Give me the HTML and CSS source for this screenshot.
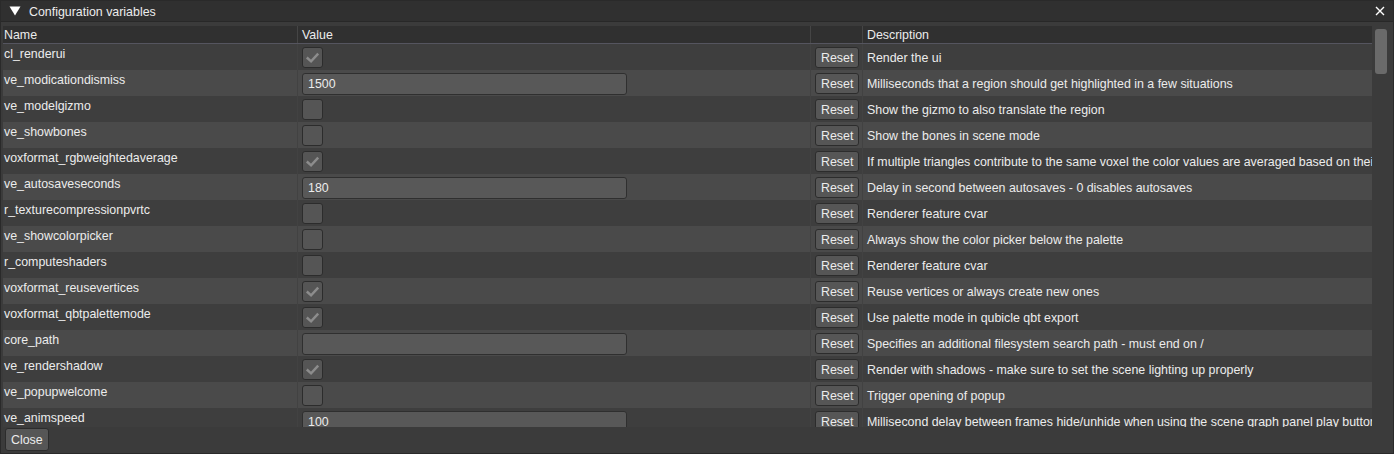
FILE: index.html
```html
<!DOCTYPE html>
<html>
<head>
<meta charset="utf-8">
<link rel="stylesheet" href="styles.css">
</head>
<body>
<div class="window">
  <div class="titlebar">
    <svg class="arrow" width="12" height="10" viewBox="0 0 12 10"><polygon points="0.5,0.5 11.5,0.5 6,9.5" fill="#ffffff"/></svg>
    <span class="title">Configuration variables</span>
    <svg class="close" width="10" height="10" viewBox="0 0 10 10"><path d="M1 1 L9 9 M9 1 L1 9" stroke="#ffffff" stroke-width="1.4"/></svg>
  </div>
  <div class="content">
    <div class="tablewrap">
      <div class="table">
        <div class="row header">
          <div class="cell name">Name</div>
          <div class="cell value">Value</div>
          <div class="cell btncell"></div>
          <div class="cell desc">Description</div>
        </div>
        <div class="row">
          <div class="cell name">cl_renderui</div>
          <div class="cell value"><span class="check on"><svg viewBox="0 0 20 20"><path d="M4 10 L8.5 14 L16 6"/></svg></span></div>
          <div class="cell btncell"><span class="btn">Reset</span></div>
          <div class="cell desc">Render the ui</div>
        </div>
        <div class="row">
          <div class="cell name">ve_modicationdismiss</div>
          <div class="cell value"><span class="input">1500</span></div>
          <div class="cell btncell"><span class="btn">Reset</span></div>
          <div class="cell desc">Milliseconds that a region should get highlighted in a few situations</div>
        </div>
        <div class="row">
          <div class="cell name">ve_modelgizmo</div>
          <div class="cell value"><span class="check"></span></div>
          <div class="cell btncell"><span class="btn">Reset</span></div>
          <div class="cell desc">Show the gizmo to also translate the region</div>
        </div>
        <div class="row">
          <div class="cell name">ve_showbones</div>
          <div class="cell value"><span class="check"></span></div>
          <div class="cell btncell"><span class="btn">Reset</span></div>
          <div class="cell desc">Show the bones in scene mode</div>
        </div>
        <div class="row">
          <div class="cell name">voxformat_rgbweightedaverage</div>
          <div class="cell value"><span class="check on"><svg viewBox="0 0 20 20"><path d="M4 10 L8.5 14 L16 6"/></svg></span></div>
          <div class="cell btncell"><span class="btn">Reset</span></div>
          <div class="cell desc">If multiple triangles contribute to the same voxel the color values are averaged based on their area</div>
        </div>
        <div class="row">
          <div class="cell name">ve_autosaveseconds</div>
          <div class="cell value"><span class="input">180</span></div>
          <div class="cell btncell"><span class="btn">Reset</span></div>
          <div class="cell desc">Delay in second between autosaves - 0 disables autosaves</div>
        </div>
        <div class="row">
          <div class="cell name">r_texturecompressionpvrtc</div>
          <div class="cell value"><span class="check"></span></div>
          <div class="cell btncell"><span class="btn">Reset</span></div>
          <div class="cell desc">Renderer feature cvar</div>
        </div>
        <div class="row">
          <div class="cell name">ve_showcolorpicker</div>
          <div class="cell value"><span class="check"></span></div>
          <div class="cell btncell"><span class="btn">Reset</span></div>
          <div class="cell desc">Always show the color picker below the palette</div>
        </div>
        <div class="row">
          <div class="cell name">r_computeshaders</div>
          <div class="cell value"><span class="check"></span></div>
          <div class="cell btncell"><span class="btn">Reset</span></div>
          <div class="cell desc">Renderer feature cvar</div>
        </div>
        <div class="row">
          <div class="cell name">voxformat_reusevertices</div>
          <div class="cell value"><span class="check on"><svg viewBox="0 0 20 20"><path d="M4 10 L8.5 14 L16 6"/></svg></span></div>
          <div class="cell btncell"><span class="btn">Reset</span></div>
          <div class="cell desc">Reuse vertices or always create new ones</div>
        </div>
        <div class="row">
          <div class="cell name">voxformat_qbtpalettemode</div>
          <div class="cell value"><span class="check on"><svg viewBox="0 0 20 20"><path d="M4 10 L8.5 14 L16 6"/></svg></span></div>
          <div class="cell btncell"><span class="btn">Reset</span></div>
          <div class="cell desc">Use palette mode in qubicle qbt export</div>
        </div>
        <div class="row">
          <div class="cell name">core_path</div>
          <div class="cell value"><span class="input"></span></div>
          <div class="cell btncell"><span class="btn">Reset</span></div>
          <div class="cell desc">Specifies an additional filesystem search path - must end on /</div>
        </div>
        <div class="row">
          <div class="cell name">ve_rendershadow</div>
          <div class="cell value"><span class="check on"><svg viewBox="0 0 20 20"><path d="M4 10 L8.5 14 L16 6"/></svg></span></div>
          <div class="cell btncell"><span class="btn">Reset</span></div>
          <div class="cell desc">Render with shadows - make sure to set the scene lighting up properly</div>
        </div>
        <div class="row">
          <div class="cell name">ve_popupwelcome</div>
          <div class="cell value"><span class="check"></span></div>
          <div class="cell btncell"><span class="btn">Reset</span></div>
          <div class="cell desc">Trigger opening of popup</div>
        </div>
        <div class="row">
          <div class="cell name">ve_animspeed</div>
          <div class="cell value"><span class="input">100</span></div>
          <div class="cell btncell"><span class="btn">Reset</span></div>
          <div class="cell desc">Millisecond delay between frames hide/unhide when using the scene graph panel play button</div>
        </div>
      </div>
      <div class="scrollbar"><div class="grab"></div></div>
    </div>
    <div class="footer"><span class="btn close-btn">Close</span></div>
  </div>
</div>
</body>
</html>
```

FILE: styles.css
```css
html, body {
  margin: 0;
  padding: 0;
  background: #3b3b3b;
}
body {
  font-family: "Liberation Sans", Arial, sans-serif;
  font-size: 12.4px;
  color: #ececec;
}
.window {
  width: 1394px;
  height: 454px;
  box-sizing: border-box;
  border: 1px solid #2a2a2a;
  background: #3b3b3b;
  display: flex;
  flex-direction: column;
  overflow: hidden;
}
.titlebar {
  height: 20px;
  flex: none;
  background: #303030;
  border-bottom: 1px solid #282828;
  display: flex;
  align-items: center;
  padding: 0 8px 0 8px;
}
.arrow {
  display: block;
  margin-right: 8px;
  margin-top: -1px;
}
.title {
  flex: 1;
  line-height: 20px;
  margin-top: 1px;
}
.close {
  display: block;
  margin-right: 0;
}
.content {
  flex: 1;
  display: flex;
  flex-direction: column;
  padding: 4px 0 0 2px;
}
.tablewrap {
  height: 401px;
  display: flex;
  flex: none;
}
.table {
  width: 1369px;
  overflow: hidden;
}
.row {
  display: grid;
  grid-template-columns: 294px 513px 52px 1fr;
  height: 26px;
  background: #3e3e3e;
}
.row:nth-child(odd) {
  background: #4a4a4a;
}
.row.header {
  height: 17px;
  background: #303030;
  border-bottom: 1px solid #55555f;
}
.cell {
  overflow: hidden;
  white-space: nowrap;
  display: flex;
  align-items: center;
}
.cell + .cell {
  border-left: 1px solid #424242;
}
.row.header .cell + .cell {
  border-left-color: #454545;
}
.header .cell {
  align-items: center;
  line-height: 17px;
  padding-top: 1px;
}
.name {
  padding-left: 1px;
  align-items: flex-start;
  padding-top: 3px;
}
.value {
  padding-left: 4px;
}
.btncell {
  padding-left: 4px;
  padding-top: 1px;
}
.desc {
  padding-left: 4px;
  padding-top: 1px;
}
.check {
  width: 19px;
  height: 19px;
  border: 1px solid #2c2c2c;
  border-radius: 3px;
  background: #555555;
  display: block;
  box-sizing: content-box;
}
.check svg {
  display: block;
  width: 19px;
  height: 19px;
}
.check svg path {
  fill: none;
  stroke: #8c8c8c;
  stroke-width: 2.6;
}
.input {
  width: 318px;
  height: 20px;
  border: 1px solid #2f2f2f;
  border-radius: 3px;
  background: #585858;
  display: flex;
  align-items: center;
  padding-left: 5px;
  margin-top: 1px;
}
.input:empty {
  width: 323px;
  padding-left: 0;
}
.btn {
  display: inline-flex;
  align-items: center;
  justify-content: center;
  height: 19px;
  padding: 0 5px;
  border: 1px solid #2c2c2c;
  border-radius: 3px;
  background: #565656;
  color: #ececec;
}
.scrollbar {
  width: 12px;
  margin-left: 3px;
  padding-top: 3px;
}
.grab {
  width: 12px;
  height: 45px;
  border-radius: 3px;
  background: #6a6a6a;
}
.footer {
  padding: 1px 0 0 2px;
}
.close-btn {
  height: 21px;
  padding: 0 5px;
}
```
